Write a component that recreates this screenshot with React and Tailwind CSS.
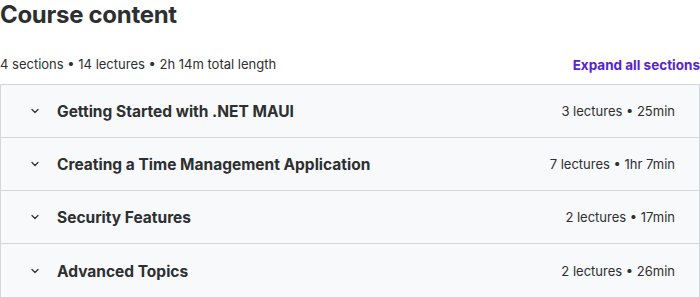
import React from "react";

const sections = [
  { title: "Getting Started with .NET MAUI", meta: "3 lectures • 25min" },
  { title: "Creating a Time Management Application", meta: "7 lectures • 1hr 7min" },
  { title: "Security Features", meta: "2 lectures • 17min" },
  { title: "Advanced Topics", meta: "2 lectures • 26min" },
];

function Chevron() {
  return (
    <svg width="12" height="12" viewBox="0 0 24 24" fill="none" stroke="#2d2f31" strokeWidth="2.4" strokeLinecap="round" strokeLinejoin="round">
      <path d="M6 9l6 6 6-6" />
    </svg>
  );
}

export default function App() {
  return (
    <div className="w-[700px] h-[297px] overflow-hidden bg-white text-[#2d2f31]" style={{ fontFamily: "Inter, 'Noto Sans', sans-serif" }}>
      <h2 className="text-[24px] font-bold leading-[30px] tracking-[-0.3px] h-[30px]">Course content</h2>
      <div className="flex items-center justify-between h-[54px] pt-[16px]">
        <span className="text-[13px] text-[#2d2f31]">4 sections • 14 lectures • 2h 14m total length</span>
        <span className="text-[13.5px] font-bold text-[#5624d0]">Expand all sections</span>
      </div>
      <div className="border border-[#d1d7dc] border-b-0">
        {sections.map((s, i) => (
          <div key={i} className={"flex items-center bg-[#f7f9fa] pl-[28px] pr-[24px] " + (i < sections.length - 1 ? "h-[53px] border-b border-[#d1d7dc]" : "h-[54px]")}>
            <Chevron />
            <span className="ml-[16px] text-[15.5px] font-bold flex-1 pt-[1px]">{s.title}</span>
            <span className="text-[13px] text-[#2d2f31] pt-[1px]">{s.meta}</span>
          </div>
        ))}
      </div>
    </div>
  );
}
